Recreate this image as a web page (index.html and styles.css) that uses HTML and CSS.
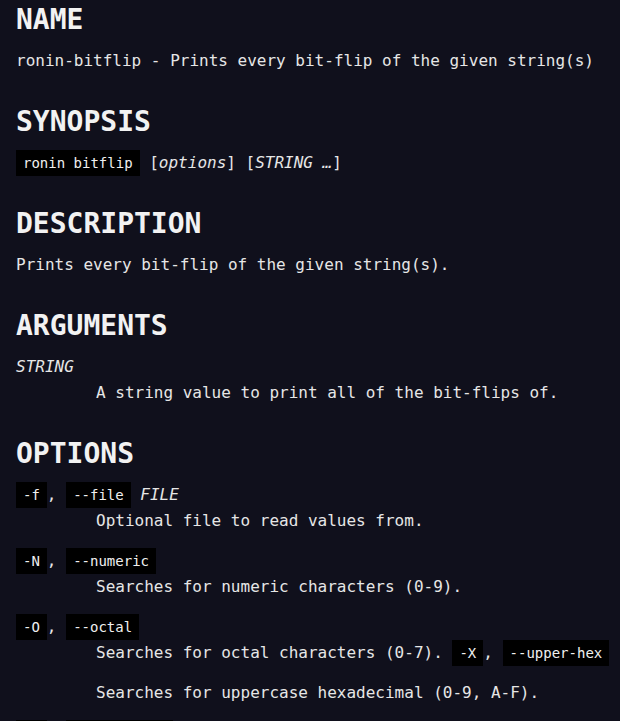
FILE: index.html
```html
<!DOCTYPE html>
<html lang="en">
<head>
<meta charset="utf-8">
<title>ronin-bitflip</title>
<link rel="stylesheet" href="styles.css">
</head>
<body>
<main class="man">
  <h2 class="sec">NAME</h2>
  <p class="para">ronin-bitflip - Prints every bit-flip of the given string(s)</p>

  <h2 class="sec">SYNOPSIS</h2>
  <p class="para"><code class="cmd">ronin bitflip</code> [<em>options</em>] [<em>STRING …</em>]</p>

  <h2 class="sec">DESCRIPTION</h2>
  <p class="para">Prints every bit-flip of the given string(s).</p>

  <h2 class="sec">ARGUMENTS</h2>
  <dl class="defs">
    <dt class="term"><em>STRING</em></dt>
    <dd class="desc"><p class="dpara">A string value to print all of the bit-flips of.</p></dd>
  </dl>

  <h2 class="sec">OPTIONS</h2>
  <dl class="defs">
    <dt class="term"><code class="cmd">-f</code>, <code class="cmd">--file</code> <em>FILE</em></dt>
    <dd class="desc"><p class="dpara">Optional file to read values from.</p></dd>
    <dt class="term"><code class="cmd">-N</code>, <code class="cmd">--numeric</code></dt>
    <dd class="desc"><p class="dpara">Searches for numeric characters (0-9).</p></dd>
    <dt class="term"><code class="cmd">-O</code>, <code class="cmd">--octal</code></dt>
    <dd class="desc">
      <p class="dpara">Searches for octal characters (0-7). <code class="cmd">-X</code>, <code class="cmd">--upper-hex</code></p>
      <p class="dpara">Searches for uppercase hexadecimal (0-9, A-F).</p>
    </dd>
    <dt class="term"><code class="cmd">-x</code>, <code class="cmd">--lower-hex</code></dt>
    <dd class="desc"><p class="dpara">Searches for lowercase hexadecimal (0-9, a-f).</p></dd>
  </dl>
</main>
</body>
</html>
```

FILE: styles.css
```css
html, body {
  margin: 0;
  padding: 0;
  background: #10101c;
}

body {
  color: #e6e6e6;
  font-family: "DejaVu Sans Mono", monospace;
  font-size: 16px;
  line-height: 26px;
}

.man {
  padding: 6px 16px 40px 16px;
}

.sec {
  font-size: 28px;
  line-height: 28px;
  font-weight: bold;
  color: #f2f2f2;
  margin: 34px 0 14px 0;
}

.sec:first-child {
  margin-top: 0;
}

.para {
  margin: 14px 0;
  white-space: nowrap;
}

.defs {
  margin: 14px 0;
}

.term {
  margin: 0;
  white-space: nowrap;
}

.desc {
  margin: 0 0 14px 80px;
}

.dpara {
  margin: 0 0 14px 0;
  white-space: nowrap;
}

.dpara:last-child {
  margin-bottom: 0;
}

em {
  font-style: italic;
}

.cmd {
  font-family: "DejaVu Sans Mono", monospace;
  font-size: 14px;
  background: #000000;
  color: #f0f0f0;
  padding: 5px 7px;
}
```
